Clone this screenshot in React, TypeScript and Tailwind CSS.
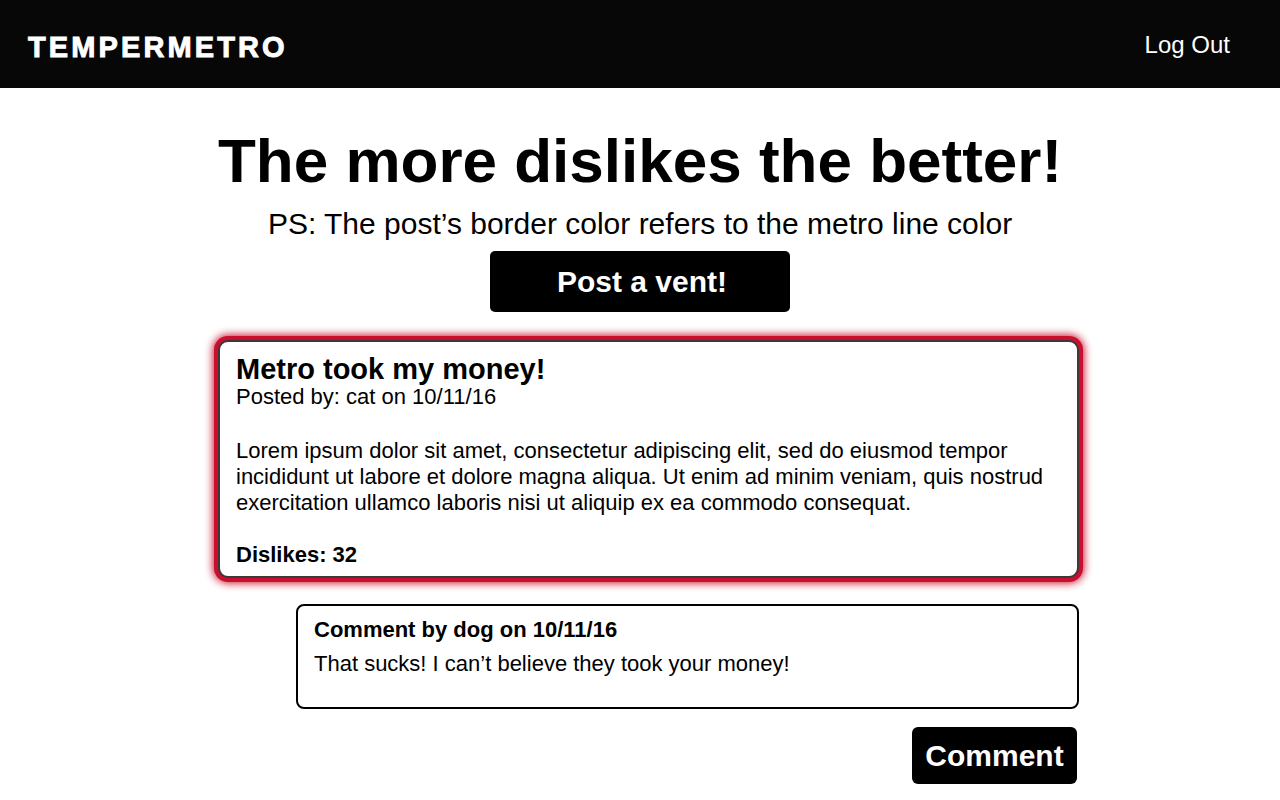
export default function App() {
  const font = { fontFamily: '"Liberation Sans", Arial, sans-serif' };
  return (
    <div className="min-h-[800px] bg-white text-black" style={font}>
      <header className="flex h-[88px] items-center justify-between bg-[#070707] pl-[28px] pr-[50px]">
        <div className="mt-[6px] text-[29px] font-bold leading-none tracking-[3.1px] text-white [-webkit-text-stroke:0.9px_white]">TEMPERMETRO</div>
        <div className="mt-[2px] text-[24px] leading-none text-white">Log Out</div>
      </header>
      <main className="flex flex-col">
        <div className="flex flex-col items-center">
          <h1 className="mt-[39px] text-[62px] font-bold leading-[68px]">The more dislikes the better!</h1>
          <p className="mt-[12px] text-[30px] leading-[34px]">PS: The post’s border color refers to the metro line color</p>
          <button className="mt-[10px] flex h-[61px] w-[300px] items-center justify-center rounded-[5px] bg-black pl-[4px] text-[30px] font-bold text-white">
            Post a vent!
          </button>
        </div>
        <div className="ml-[218px] mt-[28px] flex w-[861px] flex-col">
          <div className="rounded-[10px] border-2 border-[#3a3a3a] bg-white px-[16px] pb-[8px] pt-[12px] shadow-[0_0_0_4px_#c8102e,0_0_8px_5px_#c8102e]">
            <h2 className="text-[29px] font-bold leading-[30px]">Metro took my money!</h2>
            <p className="text-[22px] leading-[26px]">Posted by: cat on 10/11/16</p>
            <p className="mt-[28px] text-[22px] leading-[26px]">
              Lorem ipsum dolor sit amet, consectetur adipiscing elit, sed do eiusmod tempor incididunt ut labore et dolore magna aliqua. Ut enim ad minim veniam, quis nostrud exercitation ullamco laboris nisi ut aliquip ex ea commodo consequat.
            </p>
            <p className="mt-[26px] text-[22px] font-bold leading-[26px]">Dislikes: 32</p>
          </div>
          <div className="ml-[78px] mt-[26px] h-[105px] rounded-[8px] border-2 border-black px-[16px] pt-[11px]">
            <p className="text-[22px] font-bold leading-[26px]">Comment by dog on 10/11/16</p>
            <p className="mt-[8px] text-[22px] leading-[26px]">That sucks! I can’t believe they took your money!</p>
          </div>
          <div className="mt-[18px] flex justify-end pr-[2px]">
            <button className="flex h-[57px] w-[165px] items-center justify-center rounded-[6px] bg-black text-[30px] font-bold text-white">
              Comment
            </button>
          </div>
        </div>
      </main>
    </div>
  );
}
